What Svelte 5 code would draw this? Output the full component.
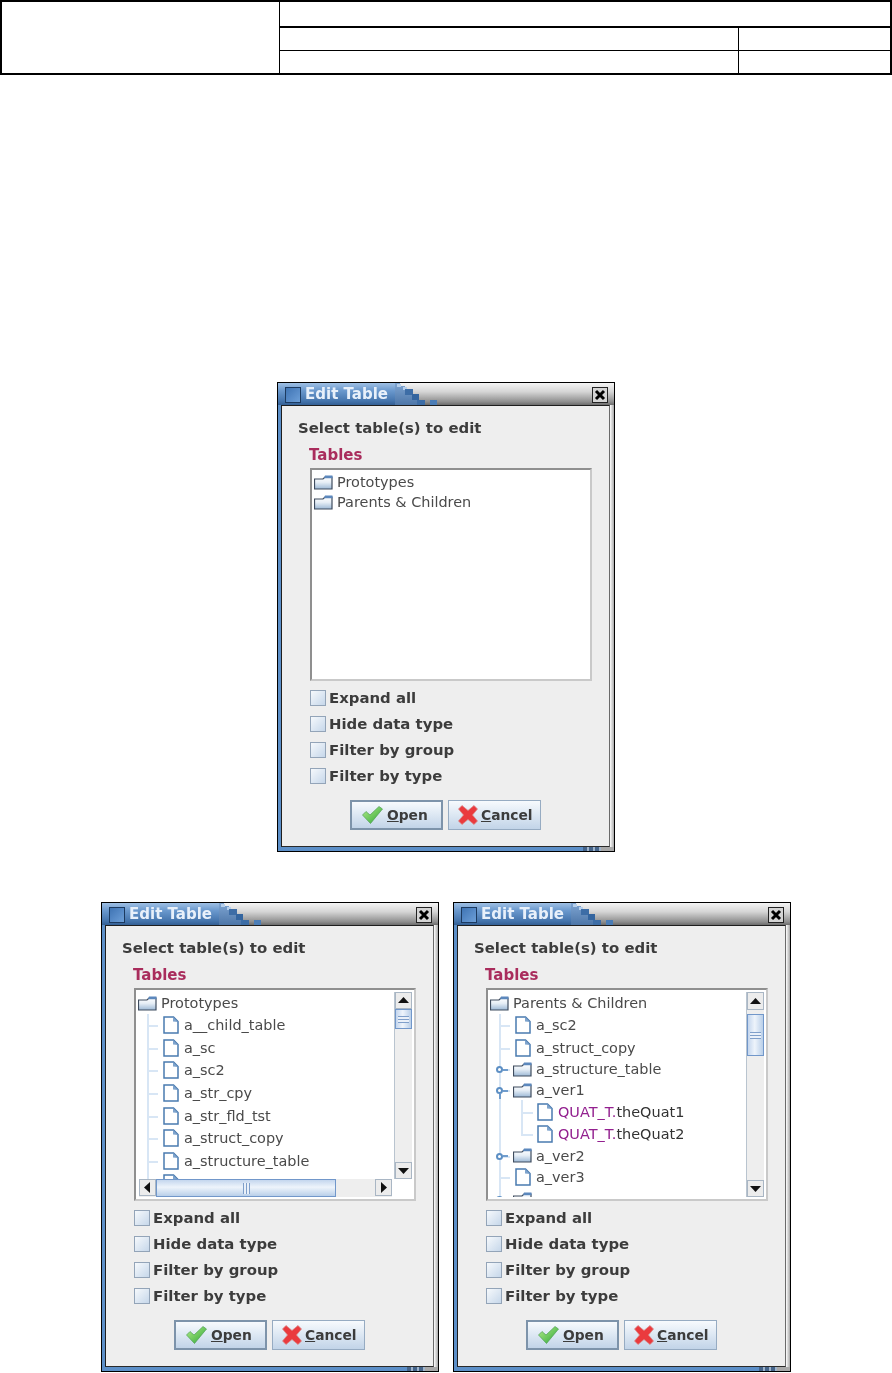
<script>
  const protoRows = [
    { label: "Prototypes", kind: "folder", depth: 0 },
    { label: "a__child_table", kind: "file", depth: 1 },
    { label: "a_sc", kind: "file", depth: 1 },
    { label: "a_sc2", kind: "file", depth: 1 },
    { label: "a_str_cpy", kind: "file", depth: 1 },
    { label: "a_str_fld_tst", kind: "file", depth: 1 },
    { label: "a_struct_copy", kind: "file", depth: 1 },
    { label: "a_structure_table", kind: "file", depth: 1 },
    { label: "", kind: "file", depth: 1 },
  ];

  const parentRows = [
    { label: "Parents & Children", kind: "folder", depth: 0 },
    { label: "a_sc2", kind: "file", depth: 1 },
    { label: "a_struct_copy", kind: "file", depth: 1 },
    { label: "a_structure_table", kind: "folder", depth: 1, toggle: "closed" },
    { label: "a_ver1", kind: "folder", depth: 1, toggle: "open" },
    { label: ".theQuat1", type: "QUAT_T", kind: "file", depth: 2 },
    { label: ".theQuat2", type: "QUAT_T", kind: "file", depth: 2, last: true },
    { label: "a_ver2", kind: "folder", depth: 1, toggle: "closed" },
    { label: "a_ver3", kind: "file", depth: 1 },
    { label: "", kind: "folder", depth: 1, toggle: "closed" },
  ];

  const rootRows = [
    { label: "Prototypes", kind: "folder", depth: 0 },
    { label: "Parents & Children", kind: "folder", depth: 0 },
  ];

  const options = ["Expand all", "Hide data type", "Filter by group", "Filter by type"];
</script>

{#snippet folderIcon()}
  <svg class="icon" width="19" height="15" viewBox="0 0 19 15">
    <defs>
      <linearGradient id="folderFill" x1="0" y1="0" x2="0" y2="1">
        <stop offset="0" stop-color="#ffffff" />
        <stop offset="0.45" stop-color="#e6eef6" />
        <stop offset="1" stop-color="#9db9d6" />
      </linearGradient>
    </defs>
    <path d="M0.5 4 L9 4 L11 2 L18 2 L18 14 L0.5 14 Z" fill="url(#folderFill)" stroke="#3f4c5e" stroke-width="1.2" />
    <path d="M11 0.5 H18.5 V3.2 H10 Z" fill="#5c88bd" />
  </svg>
{/snippet}

{#snippet fileIcon()}
  <svg class="icon" width="16" height="18" viewBox="0 0 16 18">
    <path d="M1 1 H10.5 L15 5.5 V17 H1 Z" fill="#fff" stroke="#4a7bb0" stroke-width="1.5" />
    <path d="M10 1 L15 6 L10 5.5 Z" fill="#7fa4cd" />
  </svg>
{/snippet}

{#snippet treeRow(row)}
  <div class="row {row.kind} depth{row.depth}">
    {#if row.depth > 0}
      <span class="guide"></span>
    {/if}
    {#if row.depth === 1}
      <span class="dash"></span>
    {/if}
    {#if row.depth === 2}
      <span class="guide2" class:lastLeg={row.last}></span>
      <span class="dash2"></span>
    {/if}
    {#if row.toggle}
      <span class="ring {row.toggle}"></span>
    {/if}
    {#if row.kind === "folder"}
      {@render folderIcon()}
    {:else}
      {@render fileIcon()}
    {/if}
    <span class="label">{#if row.type}<span class="typeName">{row.type}.</span><span class="varName">{row.label.slice(1)}</span>{:else}{row.label}{/if}</span>
  </div>
{/snippet}

{#snippet arrow(points)}
  <svg width="17" height="17" viewBox="0 0 17 17"><polygon points={points} fill="#111" /></svg>
{/snippet}

{#snippet dialog(rows, mode)}
  <section class="dialog">
    <header class="titlebar">
      <div class="tab">
        <span class="winIcon"></span>
        <span class="title">Edit Table</span>
      </div>
      <svg class="stairs" width="44" height="22" viewBox="0 0 44 22">
        <defs>
          <linearGradient id="stairFill" x1="0" y1="0" x2="0" y2="1">
            <stop offset="0" stop-color="#7fa5d2" />
            <stop offset="1" stop-color="#4d76a8" />
          </linearGradient>
        </defs>
        <path d="M0 0 H5 V3 H10 V7 H17 V12 H22 V17 H28 V22 H0 Z" fill="url(#stairFill)" />
        <rect x="2" y="1" width="4" height="3" fill="#b7d0ec" />
        <rect x="8" y="4" width="4" height="3" fill="#b7d0ec" />
        <rect x="10" y="6" width="8" height="6" fill="#3d6da6" />
        <rect x="17" y="11" width="7" height="6" fill="#34659f" />
        <rect x="22" y="17" width="8" height="5" fill="#3d6da6" />
        <rect x="35" y="17" width="7" height="5" fill="#4b7db6" />
      </svg>
      <svg class="close" width="16" height="16" viewBox="0 0 16 16">
        <rect x="0.5" y="0.5" width="15" height="15" fill="#d4d4d4" stroke="#222" />
        <path d="M4 4 L12 12 M12 4 L4 12" stroke="#000" stroke-width="3" />
      </svg>
    </header>
    <div class="frame">
      <div class="body">
        <div class="prompt">Select table(s) to edit</div>
        <div class="tablesLabel">Tables</div>
        <div class="tree {mode}">
          <div class="rows">
            {#each rows as row}
              {@render treeRow(row)}
            {/each}
          </div>
          {#if mode === "both" || mode === "vertical"}
            <div class="vbar">
              <div class="sbtn">{@render arrow("8.5,5 14,11 3,11")}</div>
              <div class="track">
                <div class="vthumb"><span class="grip"></span></div>
              </div>
              <div class="sbtn">{@render arrow("3,6 14,6 8.5,12")}</div>
            </div>
          {/if}
          {#if mode === "both"}
            <div class="hbar">
              <div class="sbtn">{@render arrow("5,8.5 11,3 11,14")}</div>
              <div class="htrack">
                <div class="hthumb"><span class="grip"></span></div>
              </div>
              <div class="sbtn">{@render arrow("6,3 12,8.5 6,14")}</div>
            </div>
          {/if}
        </div>
        <div class="options">
          {#each options as option}
            <label class="option"><span class="box"></span>{option}</label>
          {/each}
        </div>
        <div class="buttons">
          <button class="btn primary">
            <svg width="21" height="18" viewBox="0 0 21 18">
              <defs>
                <linearGradient id="checkFill" x1="0" y1="0" x2="1" y2="1">
                  <stop offset="0" stop-color="#b6ee8a" />
                  <stop offset="1" stop-color="#2ba535" />
                </linearGradient>
              </defs>
              <path d="M0.5 9 L4 5.5 L8 9 L17 0.5 L20.5 3 L8.5 17.5 Z" fill="url(#checkFill)" stroke="#4f9f55" stroke-width="0.7" />
            </svg>
            <span><u>O</u>pen</span>
          </button>
          <button class="btn">
            <svg width="20" height="20" viewBox="0 0 20 20">
              <path d="M0.5 4 L4 0.5 L10 5.5 L16 0.5 L19.5 4 L14.5 10 L19.5 16 L16 19.5 L10 14.5 L4 19.5 L0.5 16 L5.5 10 Z" fill="#ea3a3e" stroke="#d98a8a" stroke-width="0.8" />
            </svg>
            <span><u>C</u>ancel</span>
          </button>
        </div>
      </div>
    </div>
    <div class="bottomStrip"><span class="resizeGrip"></span></div>
  </section>
{/snippet}

<div class="page">
  <div class="docHeader">
    <div class="cellLogo"></div>
    <div class="cellTitle"></div>
    <div class="cellA"></div>
    <div class="cellB"></div>
    <div class="cellC"></div>
    <div class="cellD"></div>
  </div>

  <div class="dialogRow first">
    {@render dialog(rootRows, "plain")}
  </div>
  <div class="dialogRow second">
    {@render dialog(protoRows, "both")}
    {@render dialog(parentRows, "vertical")}
  </div>
</div>

<style>
  :global(body) {
    background: #fff;
    font-family: "DejaVu Sans", sans-serif;
  }

  .page {
    width: 892px;
    height: 1373px;
    overflow: hidden;
  }

  .docHeader {
    box-sizing: border-box;
    height: 75px;
    border: 2px solid #000;
    display: grid;
    grid-template-columns: 278px 1fr 151px;
    grid-template-rows: 26px 23px 1fr;
  }
  .cellLogo {
    grid-row: 1 / 4;
    border-right: 1px solid #000;
  }
  .cellTitle {
    grid-column: 2 / 4;
    border-bottom: 2px solid #000;
  }
  .cellA,
  .cellB {
    border-bottom: 1px solid #000;
  }
  .cellA,
  .cellC {
    border-right: 1px solid #000;
  }

  .dialogRow {
    display: flex;
    justify-content: center;
    gap: 14px;
  }
  .first {
    margin-top: 307px;
  }
  .second {
    margin-top: 50px;
  }

  .dialog {
    box-sizing: border-box;
    width: 338px;
    height: 470px;
    border: 1px solid #000;
    display: flex;
    flex-direction: column;
    background: linear-gradient(90deg, #5c8fc8 0 4px, #fff 4px, #fff 332px, #a8a8a8 336px);
    filter: blur(0.35px);
  }

  .titlebar {
    height: 22px;
    flex: none;
    display: flex;
    align-items: stretch;
    background: linear-gradient(180deg, #f4f4f4 0%, #d5d5d5 40%, #8f8f8f 85%, #6c6c6c 100%);
  }
  .tab {
    width: 117px;
    padding-left: 7px;
    box-sizing: border-box;
    display: flex;
    align-items: center;
    gap: 4px;
    background: linear-gradient(180deg, #9fc0e4 0%, #6a98cd 35%, #4676ae 80%, #335f94 100%);
  }
  .winIcon {
    width: 14px;
    height: 14px;
    margin-top: 2px;
    border: 1px solid #1c3a60;
    background: linear-gradient(135deg, #3f74b4, #6d9fd8);
  }
  .title {
    font-size: 15px;
    font-weight: 700;
    color: #e8f0fa;
  }
  .stairs {
    flex: none;
    display: block;
  }
  .close {
    margin: 4px 6px 0 auto;
  }

  .frame {
    flex: 1;
    min-height: 0;
    display: flex;
    padding: 0 4px 0 3px;
  }
  .body {
    flex: 1;
    box-sizing: border-box;
    background: #eeeeee;
    border: 1px solid #1e1e1e;
    border-right-color: #6a6a6a;
    border-bottom-color: #2a2a2a;
    color: #3c3c3c;
    display: flex;
    flex-direction: column;
  }

  .prompt {
    font-size: 14.9px;
    font-weight: 700;
    line-height: 20px;
    margin: 12px 0 0 16px;
  }
  .tablesLabel {
    font-size: 15px;
    font-weight: 700;
    line-height: 20px;
    margin: 7px 0 0 27px;
    color: #a92c5c;
  }

  .tree {
    box-sizing: border-box;
    width: 282px;
    height: 213px;
    margin: 3px 0 0 28px;
    padding: 2px;
    background: #fff;
    border: 2px solid;
    border-color: #8f8f8f #c9c9c9 #c9c9c9 #8f8f8f;
    display: grid;
    grid-template-columns: 1fr 18px;
    grid-template-rows: 1fr;
    overflow: hidden;
  }
  .tree.plain {
    grid-template-columns: 1fr;
  }
  .tree.both {
    grid-template-rows: 1fr 18px;
    column-gap: 2px;
  }
  .tree.vertical {
    column-gap: 2px;
  }
  .rows {
    min-width: 0;
    min-height: 0;
    overflow: hidden;
  }

  .row {
    position: relative;
    display: flex;
    align-items: center;
    white-space: nowrap;
    font-size: 14.45px;
    color: #4a4a4a;
  }
  .row.folder {
    height: 20.6px;
  }
  .row.file {
    height: 22.6px;
  }
  .row.depth0 {
    height: 22px;
  }
  .plain .row.depth0 {
    height: 20px;
  }
  .depth1.file {
    padding-left: 25px;
  }
  .depth1.folder {
    padding-left: 23px;
  }
  .depth2 {
    padding-left: 47px;
  }
  .icon {
    flex: none;
    display: block;
  }
  .label {
    margin-left: 4px;
  }
  .file .label {
    margin-left: 5px;
  }
  .typeName {
    color: #93208f;
  }
  .varName {
    color: #333;
  }

  /* tree connector lines sit over the row */
  .guide {
    position: absolute;
    left: 9px;
    top: 0;
    bottom: 0;
    width: 2px;
    background: #d8e6f5;
  }
  .dash {
    position: absolute;
    left: 9px;
    top: 50%;
    width: 11px;
    height: 2px;
    background: #d8e6f5;
  }
  .guide2 {
    position: absolute;
    left: 31px;
    top: 0;
    bottom: 0;
    width: 2px;
    background: #d8e6f5;
  }
  .guide2.lastLeg {
    bottom: 50%;
  }
  .dash2 {
    position: absolute;
    left: 31px;
    top: 50%;
    width: 12px;
    height: 2px;
    background: #d8e6f5;
  }
  .ring {
    position: absolute;
    left: 6px;
    top: calc(50% - 3px);
    width: 3px;
    height: 3px;
    border: 2px solid #5d8fc4;
    border-radius: 50%;
    background: #fff;
  }
  .ring::after {
    content: "";
    position: absolute;
    left: 5px;
    top: 0.5px;
    width: 5px;
    height: 2px;
    background: #6f9ccd;
  }
  .ring.open::before {
    content: "";
    position: absolute;
    left: 0.5px;
    top: 5px;
    width: 2px;
    height: 5px;
    background: #6f9ccd;
  }

  .vbar {
    min-height: 0;
    display: flex;
    flex-direction: column;
    background: #eeeeee;
    border-left: 1px solid #b9c4cf;
  }
  .tree.both .vbar {
    grid-row: 1;
    grid-column: 2;
  }
  .tree.vertical .vbar {
    grid-row: 1;
    grid-column: 2;
  }
  .hbar {
    grid-row: 2;
    grid-column: 1;
    display: flex;
    margin-left: 1px;
    background: #eeeeee;
  }
  .tree.both::after {
    content: "";
    grid-row: 2;
    grid-column: 2;
  }
  .sbtn {
    flex: none;
    width: 17px;
    height: 17px;
    box-sizing: border-box;
    border: 1px solid #a9b6c4;
    background: #ececec;
    display: flex;
    align-items: center;
    justify-content: center;
  }
  .sbtn svg {
    flex: none;
  }
  .track {
    flex: 1;
    display: flex;
    flex-direction: column;
  }
  .htrack {
    flex: 1;
    display: flex;
  }
  .vthumb {
    box-sizing: border-box;
    height: 20px;
    border: 1px solid #7197ca;
    background: linear-gradient(90deg, #c4d6ee, #eef4fb 45%, #b9cfe9);
    display: flex;
    align-items: center;
    justify-content: center;
  }
  .tree.vertical .vthumb {
    height: 42px;
    margin-top: 4px;
  }
  .tree.vertical .vbar .sbtn:first-child {
    height: 18px;
  }
  .vthumb .grip {
    width: 11px;
    height: 7px;
    background: repeating-linear-gradient(180deg, #7f9fca 0 1px, #e9f0f9 1px 3px);
  }
  .hthumb {
    box-sizing: border-box;
    width: 180px;
    border: 1px solid #7197ca;
    background: linear-gradient(180deg, #c4d6ee, #eef4fb 45%, #b9cfe9);
    display: flex;
    align-items: center;
    justify-content: center;
  }
  .hthumb .grip {
    width: 7px;
    height: 11px;
    background: repeating-linear-gradient(90deg, #7f9fca 0 1px, #e9f0f9 1px 3px);
  }

  .options {
    margin: 4px 0 0 28px;
    display: flex;
    flex-direction: column;
  }
  .option {
    height: 26px;
    display: flex;
    align-items: center;
    gap: 3px;
    font-size: 14.9px;
    font-weight: 700;
  }
  .box {
    box-sizing: border-box;
    width: 16px;
    height: 16px;
    border: 1px solid #93a4b8;
    background: linear-gradient(135deg, #f6f9fc, #c6d7ea);
  }

  .buttons {
    margin: 11px 0 0 68px;
    display: flex;
    gap: 5px;
  }
  .btn {
    box-sizing: border-box;
    width: 93px;
    height: 30px;
    padding: 0 0 0 9px;
    display: flex;
    align-items: center;
    gap: 3px;
    border: 1px solid #96abc2;
    background: linear-gradient(180deg, #f7fafd 0%, #dfe9f4 45%, #c2d4e8 100%);
    font-family: inherit;
    font-size: 13.8px;
    font-weight: 700;
    color: #3c3c3c;
  }
  .btn.primary {
    border: 2px solid #7d93aa;
    padding-left: 10px;
  }
  .btn.primary svg {
    margin-right: 1px;
  }

  .bottomStrip {
    flex: none;
    height: 4px;
    position: relative;
    background: linear-gradient(90deg, #5c8fc8 0 92%, #a8a8a8 92%);
  }
  .resizeGrip {
    position: absolute;
    left: 305px;
    top: 0;
    width: 18px;
    height: 4px;
    background: repeating-linear-gradient(90deg, #45648a 0 4px, #9fb4cc 4px 6px);
  }
</style>
